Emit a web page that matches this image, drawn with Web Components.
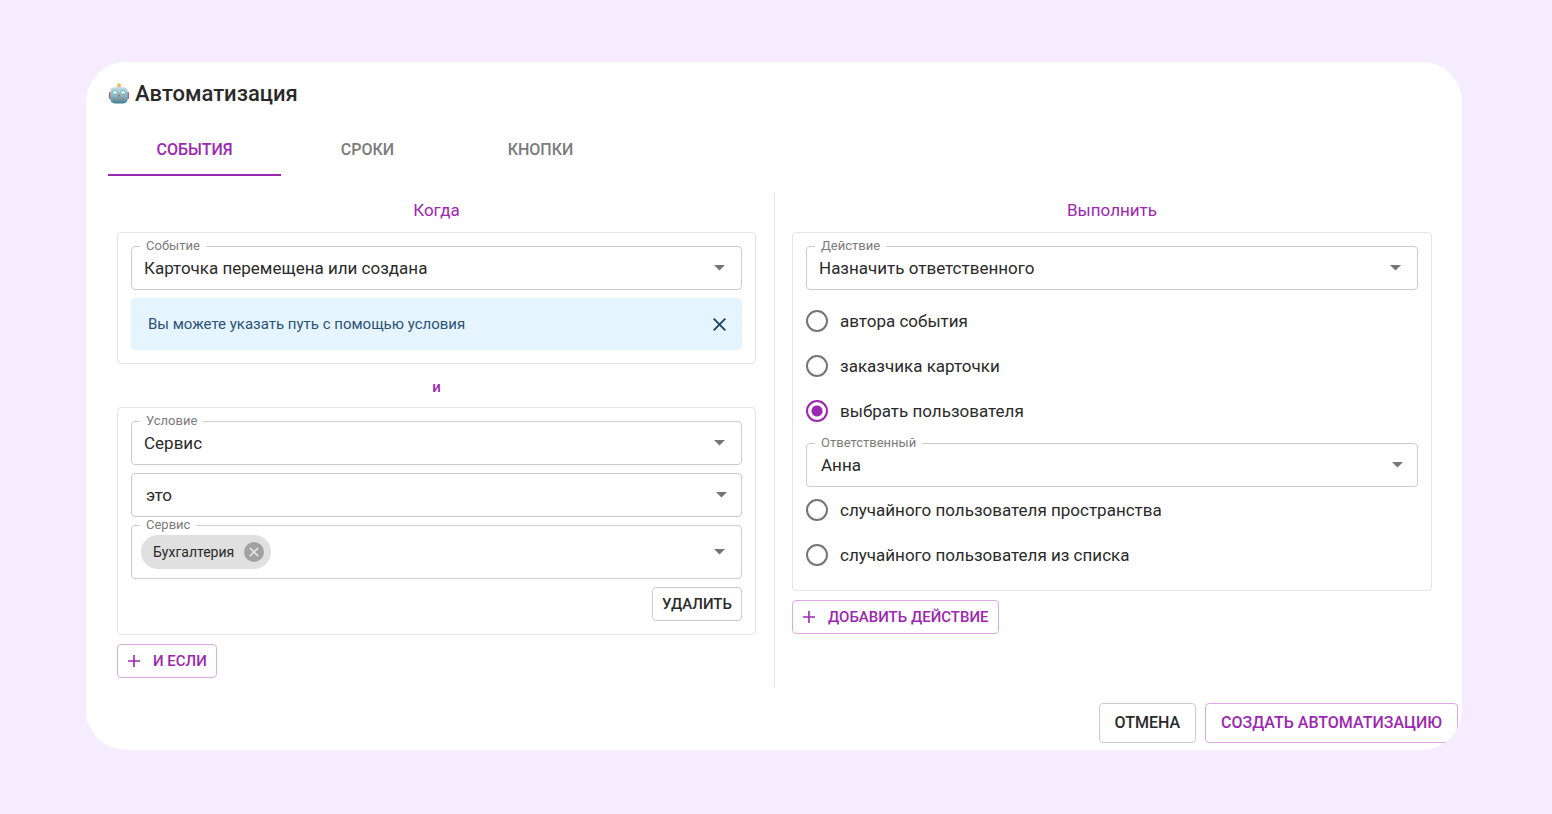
<!DOCTYPE html>
<html lang="ru">
<head>
<meta charset="utf-8">
<meta name="viewport" content="width=device-width, initial-scale=1">
<title>Автоматизация</title>
<style>
  :root {
    --accent: #9c27b0;
    --accent-line: #dba9e3;
    --ink: #2a2a2a;
    --muted: #7b7b7b;
    --line: #cccccc;
    --soft-line: #e4e4e4;
  }
  body {
    margin: 0;
    background: #f5ecff;
    color: var(--ink);
    font: 17px/24px Roboto, "Noto Sans", sans-serif;
  }
</style>
</head>
<body>
<automation-dialog></automation-dialog>

<script>
const define = (name, html, setup) => {
  const template = document.createElement('template');
  template.innerHTML = '<style>*{box-sizing:border-box}</style>' + html;
  customElements.define(name, class extends HTMLElement {
    constructor() {
      super();
      this.attachShadow({ mode: 'open' }).append(template.content.cloneNode(true));
    }
    connectedCallback() {
      if (setup && !this.ready) { this.ready = true; setup(this, this.shadowRoot); }
    }
  });
};

/* Outlined button; attributes: tone="accent", size="large", icon="plus" */
define('outline-button', `
  <style>
    :host { display: inline-flex; }
    button {
      display: flex; align-items: center; gap: 12px;
      height: 34px; padding: 0 9px;
      border: 1px solid var(--line); border-radius: 4px;
      background: #fff; color: var(--ink);
      font: 500 15px/24px Roboto, "Noto Sans", sans-serif;
      white-space: nowrap; cursor: pointer;
    }
    svg { display: none; width: 14px; height: 14px; }
    :host([icon]) svg { display: block; }
    :host([tone=accent]) button { border-color: var(--accent-line); color: var(--accent); }
    :host([size=large]) button { height: 40px; padding: 0 15px; font-size: 16px; }
  </style>
  <button type="button">
    <svg viewBox="0 0 14 14" aria-hidden="true"><path d="M7 1v12M1 7h12" stroke="currentColor" stroke-width="1.6" fill="none"/></svg>
    <slot></slot>
  </button>`);

/* Outlined drop-down with a label set into its border */
define('select-field', `
  <style>
    :host { display: block; position: relative; }
    label {
      position: absolute; left: 9px; top: -8px; padding: 0 6px;
      background: #fff; color: var(--muted); font-size: 13px; line-height: 16px;
    }
    label[hidden] { display: none; }
    select {
      appearance: none; display: block; width: 100%; height: 44px; margin: 0;
      padding: 0 36px 0 12px;
      border: 1px solid var(--line); border-radius: 4px; background: #fff;
      color: inherit; font: inherit;
    }
    svg { position: absolute; right: 17px; top: 50%; margin-top: -3px; width: 11px; height: 6px; pointer-events: none; }
    :host([search]) select { padding-left: 14px; }
    :host([search]) svg { right: 15px; }
  </style>
  <select id="box"><option></option></select>
  <label for="box"></label>
  <svg viewBox="0 0 11 6" aria-hidden="true"><path d="M0 0h11L5.500 5.500z" fill="#757575"/></svg>`,
  (host, root) => {
    root.querySelector('option').textContent = host.getAttribute('value');
    const label = root.querySelector('label');
    label.textContent = host.getAttribute('label') || '';
    label.hidden = !host.hasAttribute('label');
    if (label.hidden) root.querySelector('select').setAttribute('aria-label', 'Оператор');
  });

/* Multi-value field holding chips */
define('chip-field', `
  <style>
    :host { display: block; position: relative; }
    .frame {
      display: flex; align-items: center; height: 54px; padding: 0 16px 0 9px;
      border: 1px solid var(--line); border-radius: 4px;
    }
    label {
      position: absolute; left: 9px; top: -8px; padding: 0 6px;
      background: #fff; color: var(--muted); font-size: 13px; line-height: 16px;
    }
    input { flex: 1; min-width: 0; border: 0; outline: 0; background: none; font: inherit; }
    svg { width: 11px; height: 6px; }
  </style>
  <div class="frame">
    <slot></slot>
    <input id="box" type="text">
    <svg viewBox="0 0 11 6" aria-hidden="true"><path d="M0 0h11L5.500 5.500z" fill="#757575"/></svg>
  </div>
  <label for="box"></label>`,
  (host, root) => { root.querySelector('label').textContent = host.getAttribute('label'); });

define('value-chip', `
  <style>
    :host {
      display: inline-flex; align-items: center; gap: 10px;
      height: 34px; padding: 0 7px 0 12px; border-radius: 17px;
      background: #e0e0e0; font-size: 14px;
    }
    button { display: block; width: 20px; height: 20px; padding: 0; border: 0; background: none; cursor: pointer; }
    svg { display: block; }
  </style>
  <slot></slot>
  <button type="button" aria-label="Убрать">
    <svg width="20" height="20" viewBox="0 0 20 20"><circle cx="10" cy="10" r="10" fill="#a1a1a1"/><path d="M5.800 5.800l8.400 8.400M14.200 5.800l-8.400 8.400" stroke="#e0e0e0" stroke-width="1.800"/></svg>
  </button>`);

define('info-note', `
  <style>
    :host {
      display: flex; align-items: center; justify-content: space-between;
      height: 52px; padding: 0 16px 0 17px; border-radius: 4px;
      background: #e6f4ff; color: #2a5378; font-size: 15px;
    }
    button { display: block; padding: 0; border: 0; background: none; color: #1b4467; cursor: pointer; }
    svg { display: block; }
  </style>
  <span><slot></slot></span>
  <button type="button" aria-label="Закрыть">
    <svg width="13" height="13" viewBox="0 0 13 13"><path d="M.7.7l11.600 11.600M12.300.7L.7 12.300" stroke="currentColor" stroke-width="1.900"/></svg>
  </button>`);

define('rule-panel', `
  <style>
    :host {
      display: flex; flex-direction: column; gap: 8px;
      padding: 13px; border: 1px solid var(--soft-line); border-radius: 4px;
    }
  </style>
  <slot></slot>`);

/* Who the card gets assigned to */
define('assignee-choice', `
  <style>
    :host { display: block; }
    .option { display: flex; align-items: center; gap: 12px; height: 45px; }
    input {
      appearance: none; flex: none; width: 22px; height: 22px; margin: 0;
      border: 2px solid #757575; border-radius: 50%;
    }
    input:checked {
      border-color: var(--accent);
      background: radial-gradient(circle, var(--accent) 5px, transparent 6px);
    }
    select-field { margin-top: 10px; }
  </style>
  <div role="radiogroup" aria-label="Действие">
    <div class="option"><input type="radio" name="who" id="author"><label for="author">автора события</label></div>
    <div class="option"><input type="radio" name="who" id="customer"><label for="customer">заказчика карточки</label></div>
    <div class="option"><input type="radio" name="who" id="user" checked><label for="user">выбрать пользователя</label></div>
    <select-field search label="Ответственный" value="Анна"></select-field>
    <div class="option"><input type="radio" name="who" id="space"><label for="space">случайного пользователя пространства</label></div>
    <div class="option"><input type="radio" name="who" id="list"><label for="list">случайного пользователя из списка</label></div>
  </div>`);

define('tab-strip', `
  <style>
    :host { display: block; }
    div { display: flex; }
    button {
      width: 173px; height: 50px; padding: 0; border: 0; border-bottom: 2px solid transparent;
      background: none; color: var(--muted); cursor: pointer;
      font: 500 16px/24px Roboto, "Noto Sans", sans-serif;
    }
    button[aria-selected=true] { color: var(--accent); border-color: var(--accent); }
  </style>
  <div role="tablist">
    <button role="tab" aria-selected="true">СОБЫТИЯ</button>
    <button role="tab" aria-selected="false">СРОКИ</button>
    <button role="tab" aria-selected="false">КНОПКИ</button>
  </div>`);

define('robot-icon', `
  <style>:host { display: block; } svg { display: block; }</style>
  <svg width="22" height="22" viewBox="0 0 22 22" aria-hidden="true">
    <defs>
      <linearGradient id="face" x1="0" y1="0" x2="0" y2="1">
        <stop offset="0" stop-color="#c4dde0"/><stop offset=".55" stop-color="#86b8c3"/><stop offset="1" stop-color="#3f7f90"/>
      </linearGradient>
    </defs>
    <rect x="1" y="9" width="3" height="7" rx="1" fill="#c25b55"/>
    <rect x="18" y="9" width="3" height="7" rx="1" fill="#c25b55"/>
    <path d="M8.500 4.500Q11 2.500 13.500 4.500z" fill="#8a9aa0"/>
    <circle cx="11" cy="2.200" r="1.900" fill="#f2b84b"/>
    <path d="M2.500 7.500Q3 4.600 6.500 4.300h9q3.500 .3 4 3.200l.3 7.500q.1 5.300-4.800 5.500H7Q2.100 20.300 2.200 15z" fill="url(#face)"/>
    <circle cx="6.900" cy="9.400" r="2.500" fill="#5fb4c4"/><circle cx="6.900" cy="9.400" r="1.700" fill="#e9ffff"/>
    <circle cx="15.100" cy="9.400" r="2.500" fill="#5fb4c4"/><circle cx="15.100" cy="9.400" r="1.700" fill="#e9ffff"/>
    <path d="M11 10.400l1.600 2.900H9.400z" fill="#d8675c"/>
    <rect x="6.500" y="14.800" width="9" height="2.200" rx="1.100" fill="#8d7f7f"/>
    <path d="M8.500 14.800V17M11 14.800V17M13.500 14.800V17" stroke="#bcd" stroke-width=".6"/>
  </svg>`);

define('automation-dialog', `
  <style>
    :host { display: block; padding: 62px 90px 65px 86px; }
    main { background: #fff; border-radius: 40px; overflow: hidden; }
    header { padding: 17px 22px 0; }
    h1 { display: flex; align-items: center; gap: 5px; margin: 0 0 17px; font-size: 22px; line-height: 30px; font-weight: 500; }
    .columns { display: grid; grid-template-columns: 1fr 1fr; margin: 17px 13px 0; }
    section { padding: 0 18px 9px; }
    section + section { border-left: 1px solid var(--soft-line); padding: 0 17px 9px; }
    h2 { margin: 0; padding: 5px 0 10px; color: var(--accent); font-size: 17px; line-height: 24px; font-weight: 400; text-align: center; }
    .and { margin: 0; padding: 11px 0 8px; color: var(--accent); font-size: 15px; font-weight: 500; line-height: 24px; text-align: center; }
    .add { margin-top: 9px; }
    .end { align-self: flex-end; }
    footer { display: flex; justify-content: flex-end; gap: 9px; padding: 16px 4px 7px; }
  </style>
  <main>
    <header>
      <h1><robot-icon></robot-icon>Автоматизация</h1>
      <tab-strip></tab-strip>
    </header>
    <div class="columns">
      <section>
        <h2>Когда</h2>
        <rule-panel>
          <select-field label="Событие" value="Карточка перемещена или создана"></select-field>
          <info-note>Вы можете указать путь с помощью условия</info-note>
        </rule-panel>
        <p class="and">и</p>
        <rule-panel>
          <select-field label="Условие" value="Сервис"></select-field>
          <select-field search value="это"></select-field>
          <chip-field label="Сервис"><value-chip>Бухгалтерия</value-chip></chip-field>
          <outline-button class="end">УДАЛИТЬ</outline-button>
        </rule-panel>
        <outline-button class="add" tone="accent" icon="plus">И ЕСЛИ</outline-button>
      </section>
      <section>
        <h2>Выполнить</h2>
        <rule-panel>
          <select-field label="Действие" value="Назначить ответственного"></select-field>
          <assignee-choice></assignee-choice>
        </rule-panel>
        <outline-button class="add" tone="accent" icon="plus">ДОБАВИТЬ ДЕЙСТВИЕ</outline-button>
      </section>
    </div>
    <footer>
      <outline-button size="large">ОТМЕНА</outline-button>
      <outline-button size="large" tone="accent">СОЗДАТЬ АВТОМАТИЗАЦИЮ</outline-button>
    </footer>
  </main>`);
</script>
</body>
</html>
